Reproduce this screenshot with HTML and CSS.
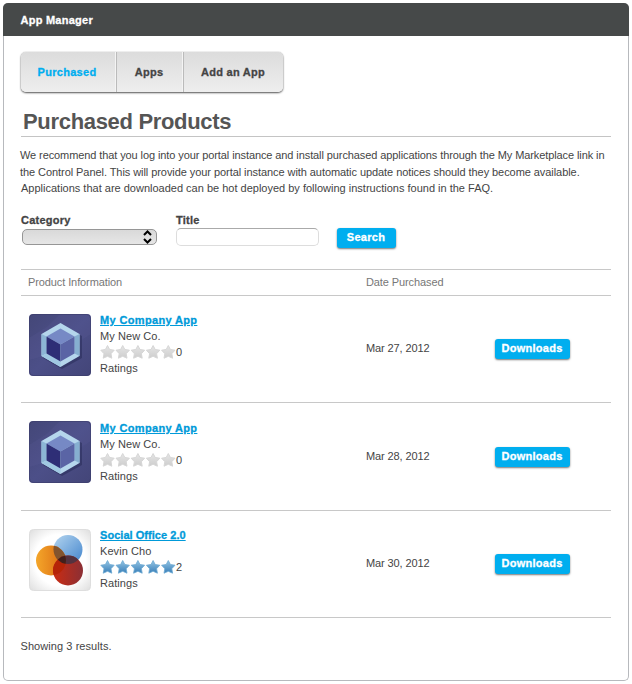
FILE: index.html
```html
<!DOCTYPE html>
<html lang="en">
<head>
<meta charset="utf-8">
<title>App Manager</title>
<link rel="stylesheet" href="styles.css">
</head>
<body>
<svg class="defs" width="0" height="0" aria-hidden="true">
  <defs>
    <linearGradient id="grayStar" x1="0" y1="0" x2="0" y2="1"><stop offset="0" stop-color="#e6e6e6"/><stop offset="1" stop-color="#cdcdcd"/></linearGradient>
    <linearGradient id="blueStar" x1="0" y1="0" x2="0" y2="1"><stop offset="0" stop-color="#94c5e4"/><stop offset="1" stop-color="#397fb8"/></linearGradient>
    <linearGradient id="night" x1="0" y1="0" x2="1" y2="1"><stop offset="0" stop-color="#444778"/><stop offset=".5" stop-color="#4c4f88"/><stop offset="1" stop-color="#434578"/></linearGradient>
    <radialGradient id="paper" r=".7"><stop offset=".6" stop-color="#fff"/><stop offset="1" stop-color="#dedede"/></radialGradient>
    <linearGradient id="sky" x1="0" y1="0" x2="1" y2="1"><stop offset="0" stop-color="#b4d5ef"/><stop offset="1" stop-color="#4385cd"/></linearGradient>
    <linearGradient id="amber" x1="0" y1="0" x2="1" y2="0"><stop offset="0" stop-color="#f4a62a"/><stop offset="1" stop-color="#d96812"/></linearGradient>
    <linearGradient id="brick" x1="0" y1="0" x2="1" y2="0"><stop offset="0" stop-color="#cb2c12"/><stop offset="1" stop-color="#8b2f35"/></linearGradient>
    <symbol id="stars" viewBox="0 0 76 14">
      <path id="s" d="M7.500 .5 9.600 4.500 14.200 5.200 11 8.700 11.800 13.200 7.500 11.300 3.200 13.200 4 8.700 .8 5.200 5.400 4.500Z"/>
      <use href="#s" x="15.200"/><use href="#s" x="30.400"/><use href="#s" x="45.600"/><use href="#s" x="60.800"/>
    </symbol>
    <symbol id="cube" viewBox="0 0 62 62">
      <rect width="62" height="62" rx="4" fill="url(#night)"/>
      <path d="M0 24 18 13 31 0H58Q62 0 62 4V20L36 36 0 46Z" fill="#6365a0" opacity=".16"/>
      <path d="M33 12 53 22V44L33 55 14 44Z" fill="#222550" opacity=".45"/>
      <path d="M31.500 9 50.500 20V42L31.500 53 12.500 42V20Z" fill="#b5d6ec"/>
      <path d="M12.500 20 17.500 22.500V39.500L12.500 42Z" fill="#8cb6d5"/>
      <path d="M12.500 42 17.500 39.500 31.500 47.500V53Z" fill="#a0c8e2"/>
      <path d="M50.500 20 45.500 22.500V39.500L50.500 42Z" fill="#86afd0"/>
      <path d="M31.500 14.500 45.500 22.500 31.500 30.500 17.500 22.500Z" fill="#7689c5"/>
      <path d="M17.500 22.500 31.500 30.500V47.500L17.500 39.500Z" fill="#2e2e76"/>
      <path d="M45.500 22.500 31.500 30.500V47.500L45.500 39.500Z" fill="#5a64a5"/>
      <rect x=".5" y=".5" width="61" height="61" rx="4" fill="none" stroke="#3c3e6b" opacity=".6"/>
    </symbol>
  </defs>
</svg>
<div class="panel">
  <header class="panel-head">App Manager</header>
  <main>
    <nav class="tabs"><a class="active"><span>Purchased</span></a><a><span>Apps</span></a><a><span>Add an App</span></a></nav>
    <h1>Purchased Products</h1>
    <p class="intro"><span class="l1">We recommend that you log into your portal instance and install purchased applications through the My Marketplace link in</span> <span class="l2">the Control Panel. This will provide your portal instance with automatic update notices should they become available.</span> <span class="l3">Applications that are downloaded can be hot deployed by following instructions found in the FAQ.</span></p>
    <div class="search">
      <div class="field cat"><label>Category</label><div class="select"><svg width="9" height="14" viewBox="0 0 9 14"><path d="M1 5 4.500 1.500 8 5M1 9 4.500 12.500 8 9" fill="none" stroke="#000" stroke-width="2"/></svg></div></div>
      <div class="field title"><label>Title</label><div class="input"></div></div>
      <div class="btn search-btn">Search</div>
    </div>
    <div class="row table-head"><span>Product Information</span><span>Date Purchased</span></div>
    <div class="row">
      <div class="product"><svg class="icon" width="62" height="62"><use href="#cube"/></svg><div class="info"><a>My Company App</a><span>My New Co.</span><span class="rate"><svg class="gray" width="76" height="14"><use href="#stars"/></svg>0</span><span>Ratings</span></div></div>
      <span class="date">Mar 27, 2012</span><div class="btn">Downloads</div>
    </div>
    <div class="row tall">
      <div class="product"><svg class="icon" width="62" height="62"><use href="#cube"/></svg><div class="info"><a>My Company App</a><span>My New Co.</span><span class="rate"><svg class="gray" width="76" height="14"><use href="#stars"/></svg>0</span><span>Ratings</span></div></div>
      <span class="date">Mar 28, 2012</span><div class="btn">Downloads</div>
    </div>
    <div class="row">
      <div class="product"><svg class="icon" width="62" height="62" viewBox="0 0 62 62">
        <rect x=".5" y=".5" width="61" height="61" rx="4" fill="url(#paper)" stroke="#dedede"/>
        <circle cx="39" cy="20.500" r="14.500" fill="url(#sky)"/>
        <circle cx="22" cy="31.500" r="15" fill="url(#amber)"/>
        <circle cx="39" cy="41.500" r="15" fill="url(#brick)"/>
        <clipPath id="cb"><circle cx="39" cy="20.500" r="14.500"/></clipPath>
        <clipPath id="ca"><circle cx="22" cy="31.500" r="15"/></clipPath>
        <g clip-path="url(#cb)"><circle cx="22" cy="31.500" r="15" fill="#82542e"/><circle cx="39" cy="41.500" r="15" fill="#54323f"/></g>
        <g clip-path="url(#ca)"><circle cx="39" cy="41.500" r="15" fill="#b52408"/><g clip-path="url(#cb)"><circle cx="39" cy="41.500" r="15" fill="#40201c"/></g></g>
      </svg><div class="info"><a class="social">Social Office 2.0</a><span>Kevin Cho</span><span class="rate"><svg class="blue" width="76" height="14"><use href="#stars"/></svg>2</span><span>Ratings</span></div></div>
      <span class="date">Mar 30, 2012</span><div class="btn">Downloads</div>
    </div>
    <footer>Showing 3 results.</footer>
  </main>
</div>
</body>
</html>
```
FILE: styles.css
```css
* { box-sizing: border-box; }
body { margin: 0; padding: 3px; background: #fff; color: #444; font: 11px/16px "Liberation Sans", Arial, sans-serif; letter-spacing: .07px; }
svg { display: block; flex: none; }
.defs { position: absolute; }
.panel { width: 626px; height: 678px; border: 1px solid #b7b9bd; border-top: 0; border-radius: 5px; }
.panel-head { height: 33px; margin: 0 -1px; padding-left: 17.500px; line-height: 35px; background: #464949; color: #fff; font-weight: bold; letter-spacing: .25px; border-radius: 5px 5px 0 0; }
.panel-head, .tabs, label, .btn, .info a { -webkit-text-stroke: .3px; }
main { padding: 16px 17px 0; }
.tabs { display: flex; width: 262px; height: 40px; border-radius: 5px; background: linear-gradient(#dcdcdc, #eee); box-shadow: 0 1px 2px #555, 0 0 1px #aaa; font-weight: bold; line-height: 41px; letter-spacing: .28px; }
.tabs a { width: 67px; padding-right: 2px; text-align: center; border-left: 1px solid #bbb; box-shadow: -1px 0 #f4f4f4; }
.tabs a:first-child { width: 95px; padding-right: 3px; border: 0; box-shadow: none; color: #00aeef; }
.tabs a:last-child { width: 100px; padding-right: 1px; }
h1 { margin: 16px 0 0; height: 29px; padding-left: 2px; border-bottom: 1px solid #c4c4c4; font-size: 22px; line-height: 28px; color: #555; letter-spacing: -.32px; }
.intro { margin: 10px -10px 0 -1px; line-height: 16px; }
.intro span { display: block; white-space: nowrap; }
.l1 { letter-spacing: -.095px; }
.l2 { margin-top: 1px; letter-spacing: -.065px; }
.l3 { padding-left: 1px; letter-spacing: 0; }
.search { display: flex; height: 57px; margin-top: 16px; }
.field label { display: block; height: 16px; font-weight: bold; letter-spacing: .25px; }
.cat { width: 155px; }
.select { display: flex; justify-content: flex-end; align-items: center; width: 135px; height: 16px; margin: 1px; padding-right: 4px; border: 1px solid #969696; border-radius: 5px; background: linear-gradient(#d9d9d9, #e6e6e6); }
.title { width: 161px; }
.input { width: 143px; height: 18px; border: 1px solid #ddd; border-top-color: #aaa; border-radius: 5px; }
.btn { width: 75px; height: 20px; padding-right: 1px; border-radius: 3px; background: #00aeef; color: #fff; font-weight: bold; line-height: 19px; text-align: center; letter-spacing: .27px; box-shadow: 0 1px 2px #777; }
.search-btn { width: 59px; margin-top: 16px; }
.row { display: grid; grid-template-columns: 345px 129px 1fr; height: 107px; width: 590px; border-bottom: 1px solid #c8c8c8; }
.row.tall { height: 108px; }
.row.table-head { height: 28px; margin-top: -.2px; margin-bottom: -.8px; border-top: 1px solid #c8c8c8; line-height: 25px; color: #777; letter-spacing: -.1px; }
.row.table-head { height: 27px; margin: 0; }
.table-head span:first-child { padding-left: 7px; }
.product { display: flex; padding: 16px 0 0 8px; }
.icon { margin-top: 2px; }
.info { display: flex; flex-direction: column; padding-left: 9px; line-height: 16px; }
.info > span:last-child { margin-top: .4px; }
.info a { color: #009ad9; font-weight: bold; text-decoration: underline; letter-spacing: .35px; }
.info a.social { letter-spacing: .04px; }
.rate { display: flex; align-items: center; height: 16px; letter-spacing: 0; }
.gray { fill: url(#grayStar); stroke: #d6d6d6; stroke-linejoin: round; }
.blue { fill: url(#blueStar); stroke: #6ba8d2; stroke-width: .8; stroke-linejoin: round; }
.date { padding-top: 44px; letter-spacing: -.12px; }
.row .btn { margin-top: 43px; }
.tall .info { padding-top: 1px; }
.tall .date { padding-top: 45px; }
.tall .btn { margin-top: 44px; }
footer { margin-left: -.5px; padding-top: 20px; }
```
